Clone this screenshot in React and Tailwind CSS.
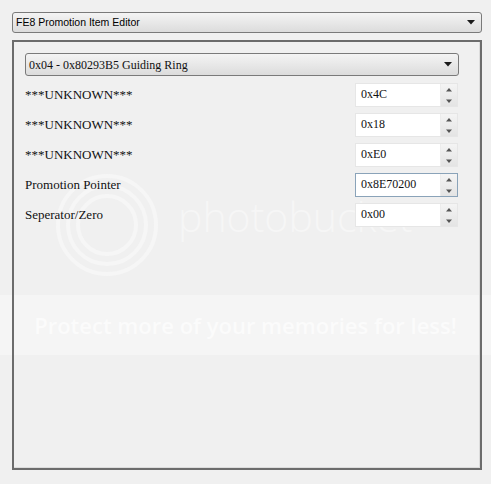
import React from "react";

const Caret = () => (
  <svg width="8" height="5" viewBox="0 0 8 5" className="block">
    <polygon points="0,0 8,0 4,4.5" fill="#1a1a1a" />
  </svg>
);

const SpinBox = ({ value, focused }) => (
  <div
    className={
      "flex h-[24px] w-[103px] mr-[1px] bg-white border " +
      (focused ? "border-[#8aa3b9]" : "border-[#e6e6e6]")
    }
  >
    <div className="flex-1 flex items-center pl-[5px] pb-[2px] text-[12px] text-[#111] [font-family:'Liberation_Serif',serif]">
      {value}
    </div>
    <div className="w-[17px] flex flex-col bg-gradient-to-b from-[#f4f4f4] to-[#e4e4e4] border-l border-[#ececec]">
      <div className="flex-1 flex items-center justify-center">
        <svg width="6" height="4" viewBox="0 0 6 4">
          <polygon points="3,0 6,3.5 0,3.5" fill="#555" />
        </svg>
      </div>
      <div className="flex-1 flex items-center justify-center">
        <svg width="6" height="4" viewBox="0 0 6 4">
          <polygon points="0,0.5 6,0.5 3,4" fill="#555" />
        </svg>
      </div>
    </div>
  </div>
);

const Row = ({ label, value, focused }) => (
  <div className="flex items-center justify-between h-[24px]">
    <span className="text-[13px] text-[#111] [font-family:'Liberation_Serif',serif]">
      {label}
    </span>
    <SpinBox value={value} focused={focused} />
  </div>
);

export default function App() {
  return (
    <div className="relative w-[491px] h-[484px] bg-[#f0f0f0] overflow-hidden">
      {/* photobucket watermark (behind the controls) */}
      <div className="absolute inset-0 pointer-events-none">
        <svg
          className="absolute left-[55px] top-[173px]"
          width="104"
          height="104"
          viewBox="0 0 104 104"
        >
          <g fill="none" stroke="#f6f6f6" strokeWidth="4">
            <circle cx="52" cy="52" r="49" />
            <circle cx="52" cy="52" r="39" />
            <circle cx="52" cy="52" r="29" />
          </g>
        </svg>
        <div className="absolute left-[178px] top-[196px] text-[41px] font-light text-[#f6f6f6] [font-family:'Open_Sans',sans-serif] leading-none whitespace-nowrap">
          photobucket
        </div>
        <div className="absolute left-0 right-0 top-[295px] h-[60px] bg-[#f5f5f5] flex items-center justify-center">
          <span className="text-[22px] font-semibold text-[#fbfbfb] [font-family:'Open_Sans',sans-serif] leading-none whitespace-nowrap">
            Protect more of your memories for less!
          </span>
        </div>
      </div>

      <div className="relative pt-[12px] pl-[12px] w-[482px]">
        <div className="flex items-center justify-between h-[21px] rounded-[3px] border border-[#7a7a7a] bg-gradient-to-b from-[#f4f4f4] to-[#dcdcdc] pl-[3px] pr-[6px]">
          <span className="text-[10.5px] text-black [font-family:'Liberation_Sans',sans-serif]">
            FE8 Promotion Item Editor
          </span>
          <Caret />
        </div>

        <div className="mt-[7px] h-[430px] border-2 border-[#6c6c6c] shadow-[inset_-1px_-1px_0_#dcdcdc] pt-[11px] pl-[11px] pr-[21px]">
          <div className="flex items-center justify-between h-[23px] rounded-[3px] border border-[#7a7a7a] bg-gradient-to-b from-[#f4f4f4] to-[#dcdcdc] pl-[3px] pr-[6px]">
            <span className="text-[12px] text-[#111] [font-family:'Liberation_Serif',serif]">
              0x04 - 0x80293B5 Guiding Ring
            </span>
            <Caret />
          </div>

          <div className="mt-[7px] flex flex-col gap-[6px]">
            <Row label="***UNKNOWN***" value="0x4C" />
            <Row label="***UNKNOWN***" value="0x18" />
            <Row label="***UNKNOWN***" value="0xE0" />
            <Row label="Promotion Pointer" value="0x8E70200" focused />
            <Row label="Seperator/Zero" value="0x00" />
          </div>
        </div>
      </div>
    </div>
  );
}
